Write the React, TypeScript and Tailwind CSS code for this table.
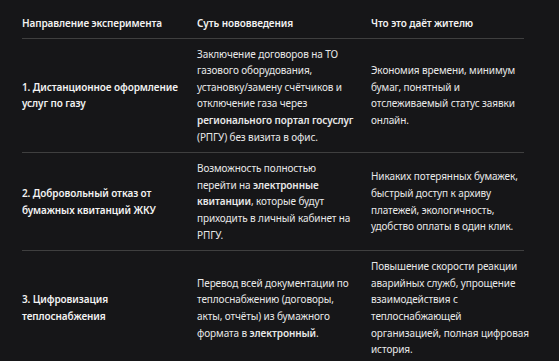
const rows = [
  {
    title: "1. Дистанционное оформление услуг по газу",
    what: (
      <>
        Заключение договоров на ТО газового оборудования, установку/замену
        счётчиков и отключение газа через{" "}
        <strong className="font-semibold">регионального портал госуслуг</strong>{" "}
        (РПГУ) без визита в офис.
      </>
    ),
    gain: "Экономия времени, минимум бумаг, понятный и отслеживаемый статус заявки онлайн.",
  },
  {
    title: "2. Добровольный отказ от бумажных квитанций ЖКУ",
    what: (
      <>
        Возможность полностью перейти на{" "}
        <strong className="font-semibold">электронные квитанции</strong>, которые
        будут приходить в личный кабинет на РПГУ.
      </>
    ),
    gain: "Никаких потерянных бумажек, быстрый доступ к архиву платежей, экологичность, удобство оплаты в один клик.",
  },
  {
    title: "3. Цифровизация теплоснабжения",
    what: (
      <>
        Перевод всей документации по теплоснабжению (договоры, акты, отчёты)
        из бумажного формата в{" "}
        <strong className="font-semibold">электронный</strong>.
      </>
    ),
    gain: "Повышение скорости реакции аварийных служб, упрощение взаимодействия с теплоснабжающей организацией, полная цифровая история.",
  },
];

export default function App() {
  return (
    <div className="w-[559px] h-[361px] overflow-hidden bg-[#161618] text-[#e8e8e8] font-['Noto_Sans',sans-serif] text-[10px] leading-[16.6px] tracking-[-0.1px] pl-[22px] pt-[10px]">
      <table className="table-fixed w-[502px] border-collapse">
        <colgroup>
          <col className="w-[175px]" />
          <col className="w-[174px]" />
          <col className="w-[153px]" />
        </colgroup>
        <thead>
          <tr className="border-b border-[#3f3f3f] text-left text-[#f2f2f2]">
            <th className="pt-[5px] pb-[6px] pr-4 font-semibold">Направление эксперимента</th>
            <th className="pt-[5px] pb-[6px] pr-4 font-semibold">Суть нововведения</th>
            <th className="pt-[5px] pb-[6px] font-semibold">Что это даёт жителю</th>
          </tr>
        </thead>
        <tbody>
          {rows.map((r, i) => (
            <tr
              key={i}
              className={i < rows.length - 1 ? "border-b border-[#3f3f3f]" : ""}
            >
              <td className="py-[7px] pr-3 align-middle font-semibold text-[#f2f2f2]">
                {r.title}
              </td>
              <td className="py-[7px] pr-4 align-middle">{r.what}</td>
              <td className="py-[7px] align-middle">
                <div className="-mr-[10px]">{r.gain}</div>
              </td>
            </tr>
          ))}
        </tbody>
      </table>
    </div>
  );
}
